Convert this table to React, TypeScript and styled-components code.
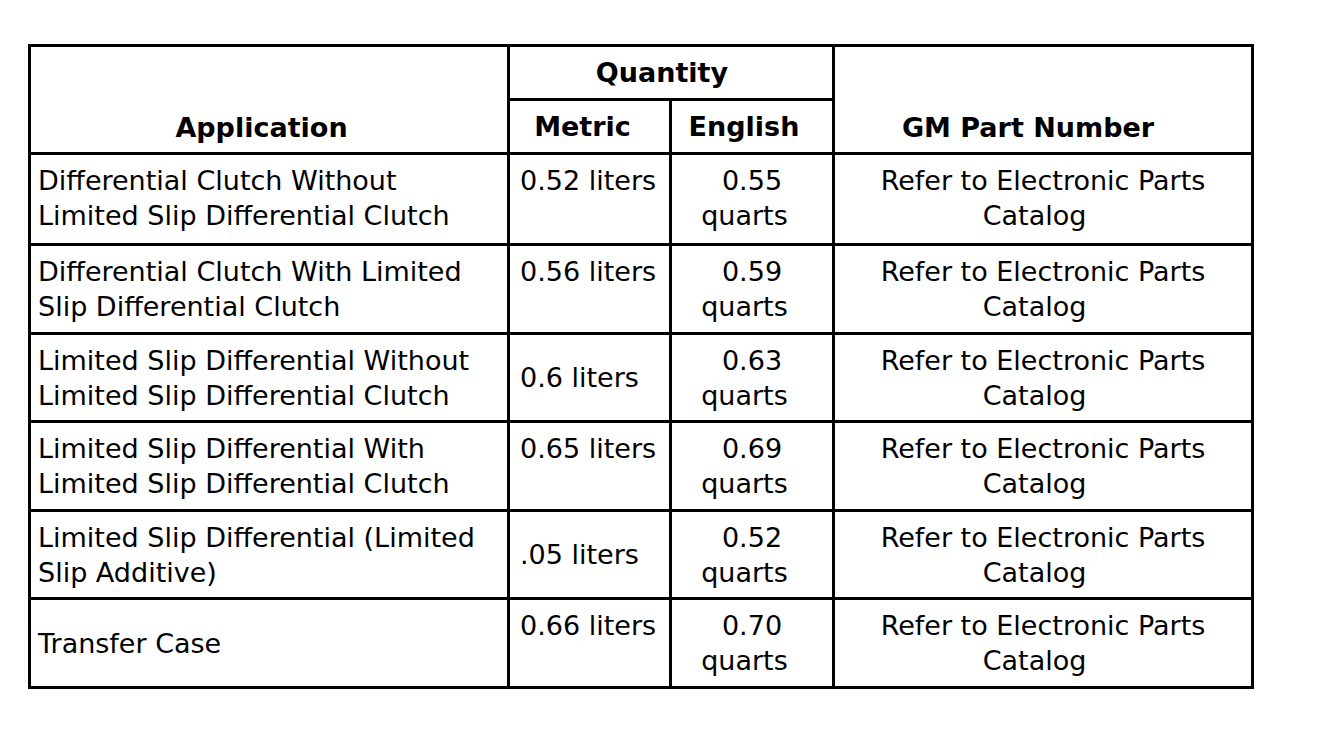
import styled, { createGlobalStyle } from 'styled-components'

type VAlign = 'top' | 'middle' | 'bottom'

type Row = {
  app: string[]
  appAlign?: VAlign
  metric: string
  metricAlign?: VAlign
  english: [string, string]
}

const rows: Row[] = [
  {
    app: ['Differential Clutch Without', 'Limited Slip Differential Clutch'],
    metric: '0.52 liters',
    english: ['0.55', 'quarts'],
  },
  {
    app: ['Differential Clutch With Limited', 'Slip Differential Clutch'],
    metric: '0.56 liters',
    english: ['0.59', 'quarts'],
  },
  {
    app: ['Limited Slip Differential Without', 'Limited Slip Differential Clutch'],
    metric: '0.6 liters',
    metricAlign: 'middle',
    english: ['0.63', 'quarts'],
  },
  {
    app: ['Limited Slip Differential With', 'Limited Slip Differential Clutch'],
    metric: '0.65 liters',
    english: ['0.69', 'quarts'],
  },
  {
    app: ['Limited Slip Differential (Limited', 'Slip Additive)'],
    metric: '.05 liters',
    metricAlign: 'middle',
    english: ['0.52', 'quarts'],
  },
  {
    app: ['Transfer Case'],
    appAlign: 'middle',
    metric: '0.66 liters',
    english: ['0.70', 'quarts'],
  },
]

const GlobalStyle = createGlobalStyle`
  html, body {
    margin: 0;
    padding: 0;
    background: #fff;
  }
  body {
    font-family: "DejaVu Sans", Verdana, sans-serif;
    color: #000;
  }
`

export default function App() {
  return (
    <Page>
      <GlobalStyle />
      <Table>
        <Cell $rowSpan={2} $valign="bottom" $bold>
          <Line $shift={15}>Application</Line>
        </Cell>
        <Cell $colSpan={2} $valign="middle" $bold>
          <Line $shift={18}>Quantity</Line>
        </Cell>
        <Cell $rowSpan={2} $valign="bottom" $bold>
          <Line $shift={30}>GM Part Number</Line>
        </Cell>
        <Cell $valign="middle" $bold>
          <Line $shift={14}>Metric</Line>
        </Cell>
        <Cell $valign="middle" $bold>
          <Line $shift={16}>English</Line>
        </Cell>

        {rows.map((r, i) => (
          <Body key={i} row={r} />
        ))}
      </Table>
    </Page>
  )
}

const Body = ({ row }: { row: Row }) => (
  <>
    <Cell $align="left" $valign={row.appAlign || 'top'} $padLeft={7}>
      {row.app.map((l) => (
        <Line key={l}>{l}</Line>
      ))}
    </Cell>
    <Cell $align="left" $valign={row.metricAlign || 'top'} $padLeft={10}>
      <Line>{row.metric}</Line>
    </Cell>
    <Cell>
      <Line>{row.english[0]}</Line>
      <Line $shift={15}>{row.english[1]}</Line>
    </Cell>
    <Cell>
      <Line>Refer to Electronic Parts</Line>
      <Line $shift={17}>Catalog</Line>
    </Cell>
  </>
)

const Page = styled.div`
  padding: 44px 0 0 28px;
`

const Table = styled.div`
  display: grid;
  grid-template-columns: 476px 159px 160px 416px;
  grid-template-rows: 51px 51px 88px 86px 85px 86px 85px 86px;
  gap: 3px;
  padding: 3px;
  width: max-content;
  background: #000;
  font-size: 27px;
  line-height: 35px;
`

const Cell = styled.div<{
  $align?: 'left' | 'center'
  $valign?: VAlign
  $rowSpan?: number
  $colSpan?: number
  $bold?: boolean
  $padLeft?: number
}>`
  background: #fff;
  display: flex;
  flex-direction: column;
  grid-row: ${(p) => (p.$rowSpan ? `span ${p.$rowSpan}` : 'auto')};
  grid-column: ${(p) => (p.$colSpan ? `span ${p.$colSpan}` : 'auto')};
  justify-content: ${(p) =>
    p.$valign === 'middle' ? 'center' : p.$valign === 'bottom' ? 'flex-end' : 'flex-start'};
  align-items: ${(p) => (p.$align === 'left' ? 'flex-start' : 'center')};
  padding: ${(p) => (p.$valign === 'middle' ? '0' : '8px')} 0 ${(p) =>
      p.$valign === 'bottom' ? '7px' : '0'} ${(p) => p.$padLeft || 0}px;
  font-weight: ${(p) => (p.$bold ? 700 : 400)};
  white-space: nowrap;
`

const Line = styled.span<{ $shift?: number }>`
  display: block;
  padding-right: ${(p) => p.$shift || 0}px;
`
